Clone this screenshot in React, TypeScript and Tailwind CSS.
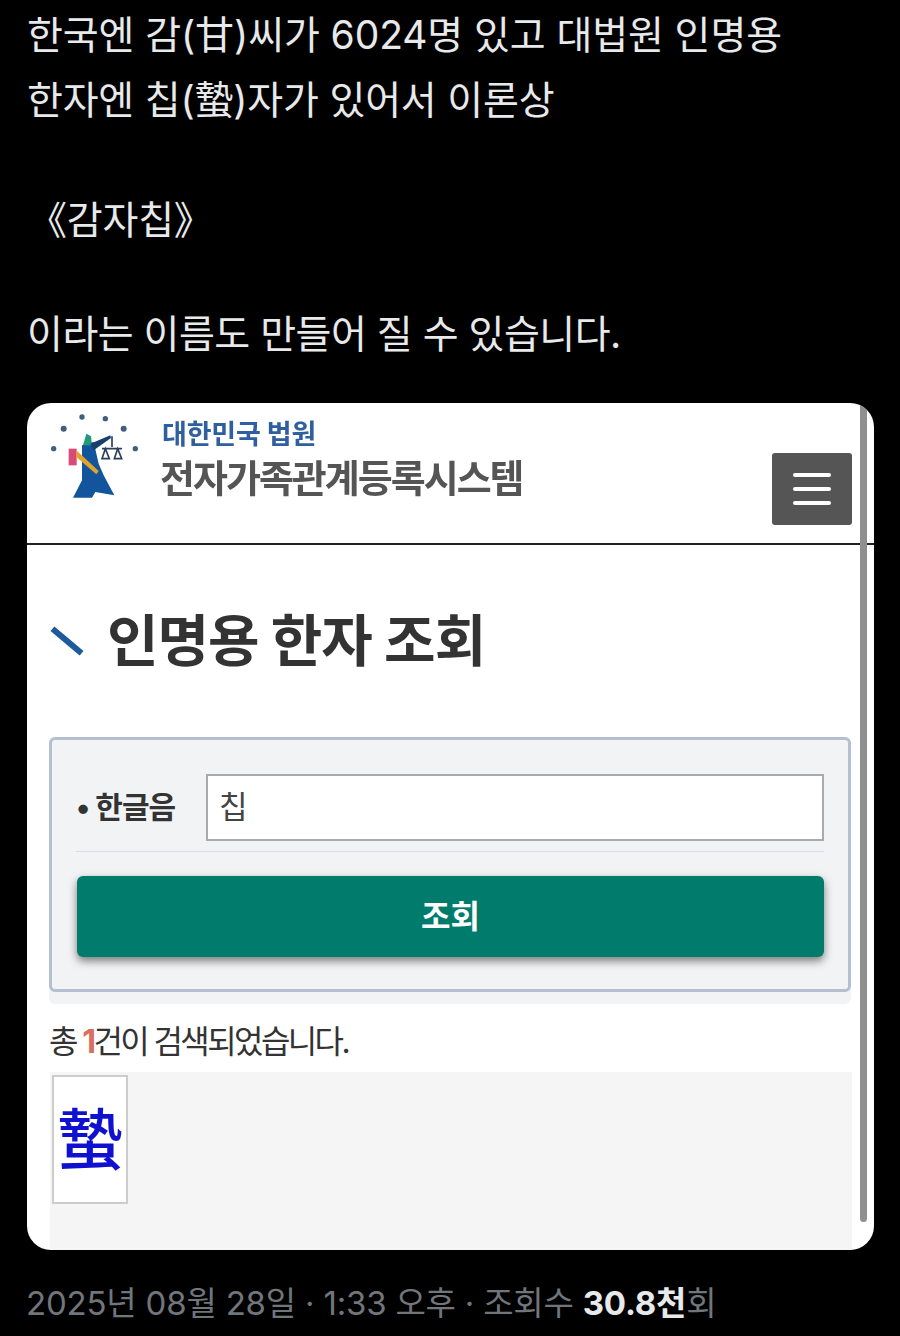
const sans = "font-['Inter','Noto_Sans_CJK_KR',sans-serif]";

// court emblem, traced from the reference at 3x so the viewBox is in crop coordinates
function CourtLogo() {
  return (
    <svg width="100" height="95" viewBox="60 20 300 285" className="shrink-0 blur-[0.5px]">
      <g fill="#3f5f7c">
        <circle cx="110" cy="85" r="9" />
        <circle cx="165" cy="50" r="8" />
        <circle cx="235" cy="55" r="8" />
        <circle cx="290" cy="85" r="9" />
        <circle cx="325" cy="145" r="8" />
        <circle cx="80" cy="145" r="8" />
      </g>
      <path d="M165 135 L200 125 L215 190 L230 225 L262 285 L205 275 L195 292 L138 292 L165 240 Z" fill="#12559c" />
      <path d="M178 100 L192 108 L195 135 L168 135 Z" fill="#1f9a7a" />
      <path d="M190 130 L250 105 L252 113 L200 150 Z" fill="#17406f" />
      <rect x="125" y="145" width="24" height="50" fill="#d94a78" />
      <path d="M148 150 L215 212 L208 222 L148 170 Z" fill="#e2a52a" />
      <path d="M255 108 V140 M225 145 H285 M235 145 l-10 30 h22 z M272 145 l-10 30 h22 z" fill="none" stroke="#2b3f5c" strokeWidth="5" />
    </svg>
  );
}

export default function App() {
  return (
    <div className={`w-[900px] h-[1336px] bg-black overflow-hidden px-[27px] ${sans}`}>
      <div className="pt-[2px] text-[39px] leading-[65px] text-[#e7e9ea] tracking-[-0.2px]">
        <p className="whitespace-nowrap tracking-[-0.1px]">한국엔 감(甘)씨가 6024명 있고 대법원 인명용</p>
        <p className="whitespace-nowrap">한자엔 칩(蟄)자가 있어서 이론상</p>
        <p className="mt-[60px] pl-[1px] leading-[55px]">《감자칩》</p>
        <p className="mt-[54px] whitespace-nowrap tracking-[-0.5px]">이라는 이름도 만들어 질 수 있습니다.</p>
      </div>

      <div className="relative mt-[37px] h-[847px] w-[847px] rounded-[24px] bg-white overflow-hidden">
        <div className="flex h-[142px] items-start justify-between border-b-2 border-[#222] pl-[20px] pr-[22px]">
          <div className="flex items-start">
            <div className="mt-[4px]"><CourtLogo /></div>
            <div className="ml-[13px] blur-[0.5px] whitespace-nowrap">
              <p className="mt-[15px] pl-[2px] text-[27px] leading-[34px] font-bold text-[#2f5f9e] tracking-[-0.2px]">대한민국 법원</p>
              <p className="mt-[3px] text-[38px] leading-[46px] font-bold text-[#555] tracking-[-2px]">전자가족관계등록시스템</p>
            </div>
          </div>
          <div className="mt-[50px] flex h-[72px] w-[80px] flex-col items-center justify-center gap-[10px] rounded-[3px] bg-[#555]">
            <span className="h-[4px] w-[38px] rounded-full bg-white" />
            <span className="h-[4px] w-[38px] rounded-full bg-white" />
            <span className="h-[4px] w-[38px] rounded-full bg-white" />
          </div>
        </div>

        <div className="flex items-center pl-[21px] pt-[56px]">
          <span className="block h-[6px] w-[38px] rotate-[40deg] bg-[#1c5a9c]" />
          <h1 className="ml-[21px] whitespace-nowrap text-[56px] leading-[80px] font-bold text-[#333] tracking-[-1px]">인명용 한자 조회</h1>
        </div>

        <div className="mx-[22px] mt-[56px] w-[802px] rounded-[6px] bg-[#f1f3f5] pb-[12px]">
          <div className="h-[255px] rounded-[6px] border-[3px] border-[#b4c0d2] px-[24px] pt-[34px]">
            <div className="flex items-center border-b border-[#d8dde3] pb-[10px]">
              <span className="w-[130px] shrink-0 whitespace-nowrap text-[30px] leading-[67px] font-bold text-[#333] tracking-[-1px]">• 한글음</span>
              <div className="flex h-[67px] w-[618px] items-center border-2 border-[#aaa] bg-white pl-[11px] text-[31px] text-[#444]">칩</div>
            </div>
            <div className="mt-[24px] ml-[1px] flex h-[81px] items-center justify-center rounded-[6px] bg-[#007b6c] text-[32px] font-bold text-white shadow-[0_4px_8px_rgba(0,0,0,0.5)]">조회</div>
          </div>
        </div>

        <p className="mx-[22px] mt-[14px] whitespace-nowrap text-[32px] leading-[48px] text-[#333] tracking-[-2.6px]">
          총 <span className="font-bold text-[#d9705f]">1</span>건이 검색되었습니다.
        </p>
        <div className="mx-[23px] mt-[6px] h-[180px] w-[802px] bg-[#f5f5f5] pl-[2px] pt-[3px]">
          <div className="flex h-[129px] w-[76px] items-center justify-center border-2 border-[#ccc] bg-white pb-[10px] text-[66px] leading-none font-medium text-[#1010d0] font-['Noto_Sans_CJK_KR',serif]">蟄</div>
        </div>

        <div className="absolute right-[7px] top-0 bottom-[28px] w-[7px] rounded-b-full bg-[#8f8f8f]" />
      </div>

      <p className="mt-[29px] -ml-[1px] whitespace-nowrap text-[33px] leading-[48px] text-[#71767b] tracking-[-0.2px]">
        2025년 08월 28일 · 1:33 오후 · 조회수 <span className="font-bold text-[#e7e9ea]">30.8천</span>회
      </p>
    </div>
  );
}
